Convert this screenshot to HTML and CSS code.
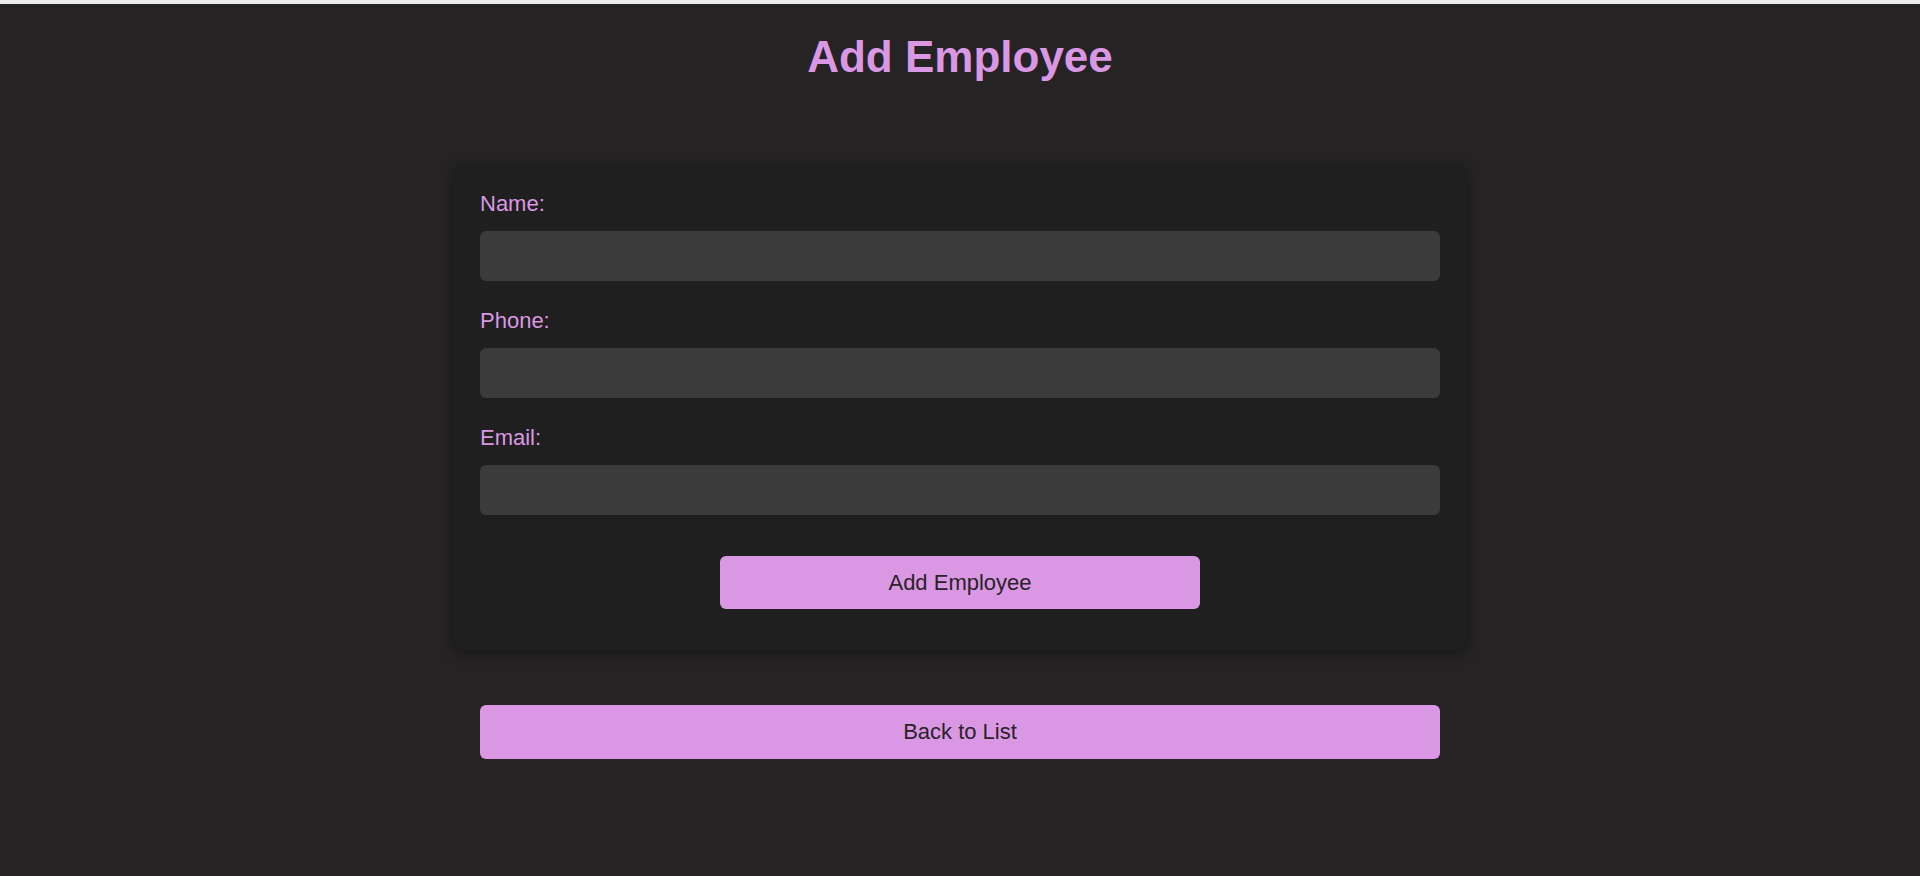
FILE: index.html
```html
<!DOCTYPE html>
<html lang="en">
<head>
<meta charset="utf-8">
<title>Add Employee</title>
<link rel="stylesheet" href="styles.css">
</head>
<body>
<h1 class="title">Add Employee</h1>
<main class="wrap">
  <form class="card">
    <div class="field">
      <label class="label" for="name">Name:</label>
      <input class="input" id="name" type="text">
    </div>
    <div class="field">
      <label class="label" for="phone">Phone:</label>
      <input class="input" id="phone" type="text">
    </div>
    <div class="field">
      <label class="label" for="email">Email:</label>
      <input class="input" id="email" type="email">
    </div>
    <button class="btn submit" type="button">Add Employee</button>
  </form>
  <a class="btn back" href="#">Back to List</a>
</main>
</body>
</html>
```
FILE: styles.css
```css
html, body {
  margin: 0;
  padding: 0;
}
body {
  background: #252324;
  border-top: 4px solid #ececec;
  font-family: "Liberation Sans", Arial, sans-serif;
  min-height: 872px;
}
.title {
  margin: 28px 0 0;
  font-size: 44px;
  line-height: 50px;
  font-weight: bold;
  text-align: center;
  color: #da98e4;
}
.wrap {
  width: 1014px;
  margin: 82px auto 0;
  display: flex;
  flex-direction: column;
}
.card {
  background: #1f1f1f;
  border-radius: 10px;
  box-shadow: 0 4px 14px rgba(0, 0, 0, 0.35);
  padding: 28px 27px 41px;
  display: flex;
  flex-direction: column;
}
.field {
  display: flex;
  flex-direction: column;
  margin-bottom: 28px;
}
.label {
  font-size: 22px;
  line-height: 24px;
  color: #da98e4;
  margin-bottom: 15px;
}
.input {
  box-sizing: border-box;
  height: 50px;
  width: 100%;
  border: none;
  border-radius: 6px;
  background: #3b3b3b;
  color: #eee;
  font-family: inherit;
  font-size: 22px;
  padding: 0 14px;
  outline: none;
}
.btn {
  box-sizing: border-box;
  display: flex;
  align-items: center;
  justify-content: center;
  background: #da98e4;
  color: #2a2228;
  font-family: inherit;
  font-size: 22px;
  line-height: 25px;
  border: none;
  border-radius: 6px;
  text-decoration: none;
  cursor: pointer;
  padding: 0 0 1px;
}
.submit {
  align-self: center;
  width: 480px;
  height: 53px;
  margin-top: 13px;
}
.back {
  margin: 55px 27px 0;
  height: 54px;
}
```
